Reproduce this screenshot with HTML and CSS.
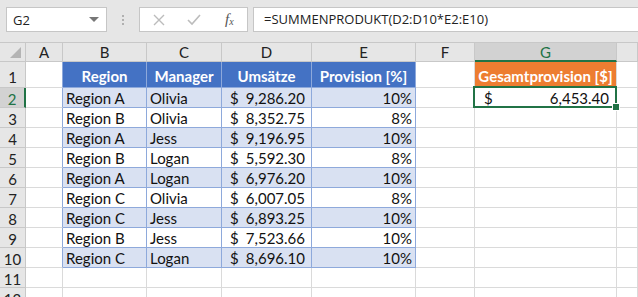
FILE: index.html
```html
<!DOCTYPE html>
<html>
<head>
<meta charset="utf-8">
<link rel="stylesheet" href="styles.css">
</head>
<body>
<div class="toolbar">
  <div class="namebox"><span>G2</span><span class="dd"></span></div>
  <div class="grip"><i></i><i></i><i></i></div>
  <div class="btns">
    <svg class="ic" width="14" height="14" viewBox="0 0 14 14"><path d="M2 2L12 12M12 2L2 12" stroke="#bcbcbc" stroke-width="1.4" fill="none"/></svg>
    <svg class="ic" width="16" height="14" viewBox="0 0 16 14"><path d="M2 7L6 11L14 2" stroke="#bcbcbc" stroke-width="1.6" fill="none"/></svg>
    <span class="fx">f<sub>x</sub></span>
  </div>
  <div class="formula">=SUMMENPRODUKT(D2:D10*E2:E10)</div>
</div>
<div class="sheet">
  <div class="ch corner"><span class="tri"></span></div>
  <div class="ch">A</div><div class="ch">B</div><div class="ch">C</div><div class="ch">D</div><div class="ch">E</div><div class="ch">F</div><div class="ch sel">G</div><div class="ch"></div>

  <div class="rh r1">1</div><div class="c ta"></div>
  <div class="c th">Region</div><div class="c th">Manager</div><div class="c th">Umsätze</div><div class="c th">Provision [%]</div>
  <div class="c"></div><div class="c oh">Gesamtprovision [$]</div><div class="c"></div>

  <div class="rh rsel">2</div><div class="c ta"></div>
  <div class="c tb b">Region A</div><div class="c tb b">Olivia</div><div class="c tb b cur"><span>$</span><span>9,286.20</span></div><div class="c tb b num">10%</div>
  <div class="c"></div><div class="c cur active"><span>$</span><span>6,453.40</span></div><div class="c"></div>

  <div class="rh">3</div><div class="c ta"></div>
  <div class="c tb">Region B</div><div class="c tb">Olivia</div><div class="c tb cur"><span>$</span><span>8,352.75</span></div><div class="c tb num">8%</div>
  <div class="c"></div><div class="c"></div><div class="c"></div>

  <div class="rh">4</div><div class="c ta"></div>
  <div class="c tb b">Region A</div><div class="c tb b">Jess</div><div class="c tb b cur"><span>$</span><span>9,196.95</span></div><div class="c tb b num">10%</div>
  <div class="c"></div><div class="c"></div><div class="c"></div>

  <div class="rh">5</div><div class="c ta"></div>
  <div class="c tb">Region B</div><div class="c tb">Logan</div><div class="c tb cur"><span>$</span><span>5,592.30</span></div><div class="c tb num">8%</div>
  <div class="c"></div><div class="c"></div><div class="c"></div>

  <div class="rh">6</div><div class="c ta"></div>
  <div class="c tb b">Region A</div><div class="c tb b">Logan</div><div class="c tb b cur"><span>$</span><span>6,976.20</span></div><div class="c tb b num">10%</div>
  <div class="c"></div><div class="c"></div><div class="c"></div>

  <div class="rh">7</div><div class="c ta"></div>
  <div class="c tb">Region C</div><div class="c tb">Olivia</div><div class="c tb cur"><span>$</span><span>6,007.05</span></div><div class="c tb num">8%</div>
  <div class="c"></div><div class="c"></div><div class="c"></div>

  <div class="rh">8</div><div class="c ta"></div>
  <div class="c tb b">Region C</div><div class="c tb b">Jess</div><div class="c tb b cur"><span>$</span><span>6,893.25</span></div><div class="c tb b num">10%</div>
  <div class="c"></div><div class="c"></div><div class="c"></div>

  <div class="rh">9</div><div class="c ta"></div>
  <div class="c tb">Region B</div><div class="c tb">Jess</div><div class="c tb cur"><span>$</span><span>7,523.66</span></div><div class="c tb num">10%</div>
  <div class="c"></div><div class="c"></div><div class="c"></div>

  <div class="rh">10</div><div class="c ta"></div>
  <div class="c tb b">Region C</div><div class="c tb b">Logan</div><div class="c tb b cur"><span>$</span><span>8,696.10</span></div><div class="c tb b num">10%</div>
  <div class="c"></div><div class="c"></div><div class="c"></div>

  <div class="rh">11</div><div class="c"></div>
  <div class="c"></div><div class="c"></div><div class="c"></div><div class="c"></div>
  <div class="c"></div><div class="c"></div><div class="c"></div>

  <div class="rh">12</div><div class="c"></div>
  <div class="c"></div><div class="c"></div><div class="c"></div><div class="c"></div>
  <div class="c"></div><div class="c"></div><div class="c"></div>
</div>
</body>
</html>
```
FILE: styles.css
```css
* { box-sizing: border-box; }
html, body { margin: 0; padding: 0; background: #fff; overflow: hidden; }
body { width: 638px; height: 297px; font-family: Lato, "Liberation Sans", sans-serif; }

.toolbar {
  height: 42px;
  background: #e6e6e6;
  display: flex;
  align-items: flex-start;
  padding: 7px 0 0 6px;
}
.namebox {
  width: 101px; height: 25px;
  background: #fff;
  border: 1px solid #c6c6c6;
  display: flex; align-items: center; justify-content: space-between;
  padding: 0 7px 0 6px;
  font-family: "Open Sans", sans-serif; font-size: 13px; color: #222;
}
.dd { width: 0; height: 0; border-left: 5px solid transparent; border-right: 5px solid transparent; border-top: 5px solid #777; }
.grip { width: 32px; height: 25px; display: flex; flex-direction: column; align-items: center; justify-content: center; gap: 2px; }
.grip i { display: block; width: 2px; height: 2px; background: #b0b0b0; }
.btns {
  width: 109px; height: 25px; background: #fff; border: 1px solid #c6c6c6;
  display: flex; align-items: center; padding: 0 0 0 12px; gap: 20px;
}
.fx { font-family: "Liberation Serif", serif; font-style: italic; font-size: 15px; color: #555; margin-left: 3px; }
.fx sub { font-size: 10px; vertical-align: -1px; }
.formula {
  margin-left: 5px; flex: 1; height: 25px; background: #fff;
  border: 1px solid #c6c6c6; border-right: none;
  font-family: "Open Sans", sans-serif; font-size: 13px; color: #222;
  padding: 2px 0 0 10px;
}

.sheet {
  display: grid;
  grid-template-columns: 26px 37px 84px 75px 90px 104px 59px 142px 1fr;
  grid-template-rows: 20px 26px repeat(11, 20px);
}
.ch, .rh {
  background: #e6e6e6;
  border-right: 1px solid #c8c8c8;
  border-bottom: 1px solid #c8c8c8;
  font-size: 15px; color: #222;
  display: flex; align-items: center; justify-content: center;
}
.ch { border-top: 1px solid #c8c8c8; }
.corner { position: relative; }
.tri { position: absolute; right: 4px; bottom: 3px; width: 0; height: 0; border-left: 11px solid transparent; border-bottom: 11px solid #b4b4b4; }
.ch.sel { background: #d2d2d2; color: #217346; border-bottom: 2px solid #217346; }
.rh { justify-content: center; padding-top: 2px; }
.rh.r1 { padding-top: 4px; }
.rh.rsel { background: #d2d2d2; color: #217346; border-right: 2px solid #217346; }

.c {
  border-right: 1px solid #dadada;
  border-bottom: 1px solid #dadada;
  font-size: 15px; color: #111;
  display: flex; align-items: flex-end; padding: 0 3px 0 3px;
  white-space: nowrap;
}
.c.ta { border-right-color: #8ea9db; }
.c.th {
  background: #4472c4; color: #fff; font-weight: 700;
  justify-content: center; align-items: center; padding-top: 2px;
  border-right-color: #8ea9db; border-bottom-color: #8ea9db;
}
.c.oh {
  background: #ed7d31; color: #fff; font-weight: 700;
  justify-content: center; align-items: center; padding-top: 2px;
  border-bottom-color: #217346;
}
.c.tb { border-right-color: #8ea9db; border-bottom-color: #8ea9db; }
.c.b { background: #d9e1f2; }
.c.cur { justify-content: space-between; padding: 0 6px 0 8px; }
.c.num { justify-content: flex-end; padding-right: 3px; }
.c.active { position: relative; padding: 0 7px 0 9px; }
.c.active::after {
  content: ""; position: absolute; left: -2px; top: -2px; right: -1px; bottom: -1px;
  border: 2px solid #217346;
}
.c.active::before {
  content: ""; position: absolute; right: -4px; bottom: -4px; width: 6px; height: 6px;
  background: #217346; border: 1px solid #fff; z-index: 2;
}
```
